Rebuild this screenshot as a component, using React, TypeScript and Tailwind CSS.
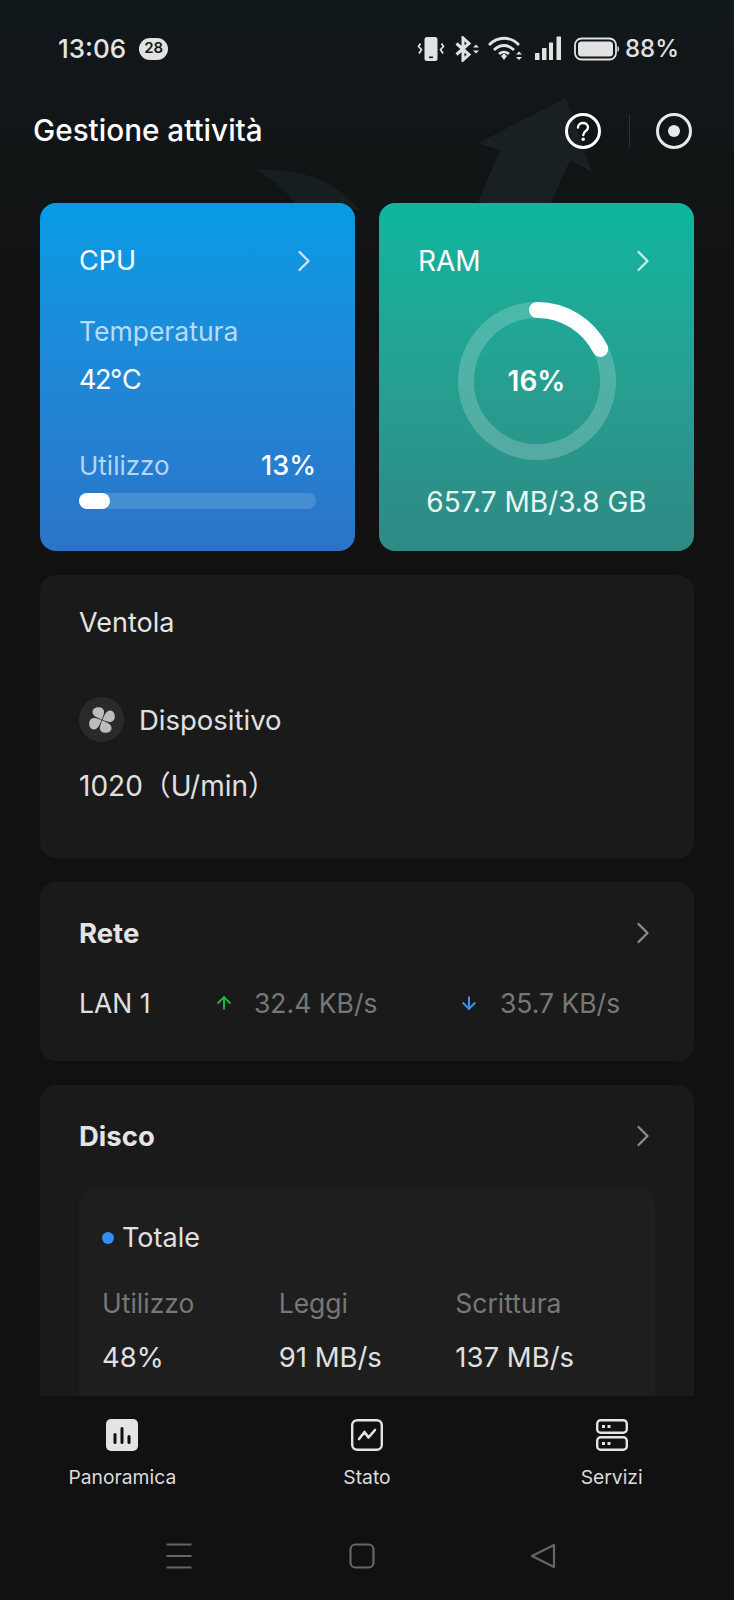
import React from 'react';
import { ChevronRight, ArrowUp, ArrowDown } from 'lucide-react';

const StatusIcons = () => (
  <div className="flex items-center text-[#e2e2e2]">
    {/* vibrate */}
    <svg width="28" height="26" viewBox="0 0 28 26" className="mr-[10px]">
      <rect x="7.5" y="1" width="13" height="24" rx="2.5" fill="currentColor" />
      <rect x="12" y="20.5" width="4" height="1.6" fill="#14191b" />
      <path d="M3.5 7.5 L1.5 10.5 L4.5 13.5 L2 17.5" stroke="currentColor" strokeWidth="1.7" fill="none" />
      <path d="M24.5 7.5 L26.5 10.5 L23.5 13.5 L26 17.5" stroke="currentColor" strokeWidth="1.7" fill="none" />
    </svg>
    {/* bluetooth */}
    <svg width="25" height="26" viewBox="0 0 25 26" className="mr-[8px]">
      <path d="M1.5 7.5 L14 18.5 L8 24 V2 L14 7.5 L1.5 18.5" stroke="currentColor" strokeWidth="3" fill="none" />
      <path d="M18 11.5 L21 8.5 L24 11.5 Z M18 14.5 L21 17.5 L24 14.5 Z" fill="currentColor" />
    </svg>
    {/* wifi */}
    <svg width="36" height="26" viewBox="0 0 36 26" className="mr-[10px]">
      <path d="M1 9 C10 0 22 0 31 9" stroke="currentColor" strokeWidth="2.8" fill="none" />
      <path d="M6 14 C12 8 20 8 26 14" stroke="currentColor" strokeWidth="2.8" fill="none" />
      <path d="M11 18 C14 15.5 18 15.5 21 18" stroke="currentColor" strokeWidth="2.8" fill="none" />
      <path d="M13 20 L16 17.5 L19 20 L16 24 Z" fill="currentColor" />
      <path d="M28 18.5 L31 15.5 L34 18.5 Z M28 21 L31 24 L34 21 Z" fill="currentColor" />
    </svg>
    {/* signal */}
    <svg width="28" height="26" viewBox="0 0 28 26" className="mr-[12px]">
      <rect x="1" y="17" width="4.5" height="7" rx="0.5" fill="currentColor" />
      <rect x="8" y="12" width="4.5" height="12" rx="0.5" fill="currentColor" />
      <rect x="15" y="6.5" width="4" height="17.5" rx="0.5" fill="currentColor" />
      <rect x="22.5" y="0.5" width="4.5" height="23.5" rx="0.5" fill="currentColor" />
    </svg>
    {/* battery */}
    <svg width="46" height="24" viewBox="0 0 46 24" className="mr-[5px]">
      <rect x="1" y="1.5" width="41" height="21" rx="6.5" stroke="currentColor" strokeWidth="1.8" fill="none" />
      <rect x="4" y="4.5" width="35" height="15" rx="3.5" fill="currentColor" />
      <path d="M43.5 9 C45.5 9.5 45.5 14.5 43.5 15 Z" fill="currentColor" />
    </svg>
    <span className="text-[24px] leading-none font-medium">88%</span>
  </div>
);

const blade = 'M14 13.5 C10 12 4.5 10 4.5 6 C4.5 2.5 8 1 11 1.2 C15 1.5 16.5 4 16 7 C15.6 9.5 14.5 11 14 13.5 Z';

const FanIcon = () => (
  <svg width="28" height="28" viewBox="0 0 28 28" fill="#bdbdbd">
    {[0, 90, 180, 270].map((deg) => (
      <path key={deg} d={blade} transform={`rotate(${deg} 14 14)`} />
    ))}
  </svg>
);

const Chevron = ({ className }: { className: string }) => (
  <ChevronRight size={36} strokeWidth={1.5} className={`-my-[3px] mr-[-6px] ${className}`} />
);

export default function App() {
  return (
    <div className="relative flex h-[1600px] w-[734px] flex-col overflow-hidden bg-[#111111] text-white [font-family:Inter,'Noto_Sans_CJK_SC',sans-serif]">
      {/* watermark behind the header */}
      <div className="absolute inset-x-0 top-0 h-[320px] bg-gradient-to-b from-[#11181b] to-[#111111]" />
      <svg className="absolute left-0 top-0" width="734" height="210" viewBox="0 0 734 210">
        <path d="M478 202 L500 150 L478 143 L566 98 L592 172 L570 160 L548 210 Z" fill="#182022" />
        <path d="M255 170 C300 168 335 180 360 210 L300 210 C290 195 275 180 255 170 Z" fill="#171e20" />
      </svg>

      {/* status bar */}
      <div className="relative flex h-[96px] shrink-0 items-center justify-between pl-[58px] pr-[55px] pt-[1px]">
        <div className="flex items-center">
          <span className="text-[26px] font-medium leading-none text-[#e4e4e4]">13:06</span>
          <span className="ml-[13px] flex h-[22px] w-[29px] items-center justify-center rounded-full bg-[#e2e2e2] text-[15px] font-semibold text-[#14191b]">28</span>
        </div>
        <StatusIcons />
      </div>

      {/* header */}
      <div className="relative flex h-[68px] shrink-0 items-center justify-between pl-[33px] pr-[41px] pt-[1px]">
        <h1 className="text-[29.7px] font-medium leading-none text-white">Gestione attività</h1>
        <div className="flex items-center">
          <svg width="38" height="38" viewBox="0 0 38 38">
            <circle cx="19" cy="19" r="16.5" stroke="#fff" strokeWidth="3" fill="none" />
            <path d="M14 15.5 C14 9.5 24 9.5 24 15.5 C24 19 19.5 18.8 19.3 23" stroke="#fff" strokeWidth="2.4" fill="none" strokeLinecap="round" />
            <circle cx="19.2" cy="27.2" r="1.7" fill="#fff" />
          </svg>
          <div className="ml-[27px] mr-[25px] h-[33px] w-px bg-[#2a3032]" />
          <svg width="38" height="38" viewBox="0 0 38 38">
            <circle cx="19" cy="19" r="16.5" stroke="#e8e8e8" strokeWidth="3" fill="none" />
            <circle cx="19" cy="19" r="6" fill="#e8e8e8" />
          </svg>
        </div>
      </div>

      <main className="relative mt-[39px] flex min-h-0 flex-1 flex-col gap-[24px] overflow-hidden px-[40px]">
        <div className="flex shrink-0 gap-[24px]">
          {/* CPU */}
          <section className="h-[348px] w-[315px] rounded-[16px] bg-gradient-to-b from-[#059be5] to-[#2a74c8] px-[39px] pt-[43px]">
            <div className="flex items-center justify-between">
              <span className="text-[27px] font-normal leading-[30px]">CPU</span>
              <Chevron className="text-[#cfe6f7]" />
            </div>
            <div className="mt-[40px] text-[26.5px] leading-[30px] text-[#b8dcf7]">Temperatura</div>
            <div className="mt-[19px] text-[27px] font-normal leading-[30px] tracking-[-1.5px]">42℃</div>
            <div className="mt-[56px] flex items-center justify-between">
              <span className="text-[26px] leading-[30px] text-[#b5d6f4]">Utilizzo</span>
              <span className="text-[27px] font-medium leading-[30px]">13%</span>
            </div>
            <div className="mt-[12px] h-[16px] w-[237px] rounded-full bg-white/15">
              <div className="h-full rounded-full bg-white" style={{ width: '13%' }} />
            </div>
          </section>

          {/* RAM */}
          <section className="flex h-[348px] w-[315px] flex-col rounded-[16px] bg-gradient-to-b from-[#0db69e] to-[#2e8a84] pt-[43px]">
            <div className="flex items-center justify-between px-[39px]">
              <span className="text-[28px] font-normal leading-[30px]">RAM</span>
              <Chevron className="text-[#c8efe7]" />
            </div>
            <div className="relative mx-auto mt-[26px] h-[158px] w-[158px]">
              <svg width="158" height="158" viewBox="0 0 158 158" className="-rotate-90">
                <circle cx="79" cy="79" r="71" fill="none" stroke="#ffffff" strokeOpacity="0.2" strokeWidth="16" />
                <circle cx="79" cy="79" r="71" fill="none" stroke="#ffffff" strokeWidth="16" strokeLinecap="round" strokeDasharray="78 446" />
              </svg>
              <div className="absolute inset-0 flex items-center justify-center text-[28px] font-semibold">16%</div>
            </div>
            <div className="mt-[27px] text-center text-[28px] leading-[30px] text-[#e8f7f4]">657.7 MB/3.8 GB</div>
          </section>
        </div>

        {/* Ventola */}
        <section className="h-[283px] shrink-0 rounded-[16px] bg-[#1a1a1a] px-[39px] pt-[33px]">
          <div className="text-[27px] leading-[30px] text-[#e4e4e4]">Ventola</div>
          <div className="mt-[59px] flex items-center">
            <div className="flex h-[45px] w-[45px] items-center justify-center rounded-full bg-[#2a2a2a]">
              <FanIcon />
            </div>
            <span className="ml-[15px] text-[27.5px] leading-[30px] text-[#e0e0e0]">Dispositivo</span>
          </div>
          <div className="mt-[29px] text-[28px] leading-[30px] text-[#e0e0e0]">1020（U/min）</div>
        </section>

        {/* Rete */}
        <section className="h-[179px] shrink-0 rounded-[16px] bg-[#1a1a1a] px-[39px] pt-[36px]">
          <div className="flex items-center justify-between">
            <span className="text-[27.5px] font-bold leading-[30px] text-[#e4e4e4]">Rete</span>
            <Chevron className="text-[#8c8c8c]" />
          </div>
          <div className="mt-[40px] flex items-center text-[26.5px] leading-[30px]">
            <span className="w-[135px] text-[#e0e0e0]">LAN 1</span>
            <ArrowUp size={20} strokeWidth={2.4} className="text-[#22b04a]" />
            <span className="ml-[20px] w-[205px] text-[#777777]">32.4 KB/s</span>
            <ArrowDown size={20} strokeWidth={2.4} className="text-[#3a94f0]" />
            <span className="ml-[21px] text-[#777777]">35.7 KB/s</span>
          </div>
        </section>

        {/* Disco */}
        <section className="shrink-0 rounded-[16px] bg-[#1a1a1a] px-[39px] pb-[40px] pt-[36px]">
          <div className="flex items-center justify-between">
            <span className="text-[27.5px] font-bold leading-[30px] text-[#e4e4e4]">Disco</span>
            <Chevron className="text-[#8c8c8c]" />
          </div>
          <div className="mt-[36px] rounded-[16px] bg-[#1e1e1e] px-[23px] pb-[40px] pt-[36px]">
            <div className="flex items-center">
              <span className="h-[12px] w-[12px] rounded-full bg-[#2f8ff5]" />
              <span className="ml-[8px] text-[27px] leading-[30px] text-[#e0e0e0]">Totale</span>
            </div>
            <div className="mt-[35px] grid grid-cols-3 leading-[30px]">
              <span className="text-[26.5px] text-[#777777]">Utilizzo</span>
              <span className="text-[26.5px] text-[#777777]">Leggi</span>
              <span className="text-[26.5px] text-[#777777]">Scrittura</span>
              <span className="mt-[24px] text-[27.5px] text-[#e0e0e0]">48%</span>
              <span className="mt-[24px] text-[27.5px] text-[#e0e0e0]">91 MB/s</span>
              <span className="mt-[24px] text-[27.5px] text-[#e0e0e0]">137 MB/s</span>
            </div>
          </div>
        </section>
      </main>

      {/* tab bar */}
      <nav className="relative grid h-[116px] shrink-0 grid-cols-3 bg-[#111111] pt-[23px]">
        <div className="flex flex-col items-center">
          <svg width="32" height="32" viewBox="0 0 32 32">
            <rect x="0" y="0" width="32" height="32" rx="5" fill="#e4e4e4" />
            <rect x="7.5" y="14" width="3" height="11" rx="1.5" fill="#111" />
            <rect x="14.5" y="8" width="3" height="17" rx="1.5" fill="#111" />
            <rect x="21.5" y="16" width="3" height="9" rx="1.5" fill="#111" />
          </svg>
          <span className="mt-[14px] text-[19.3px] leading-[24px] text-[#dcdcdc]">Panoramica</span>
        </div>
        <div className="flex flex-col items-center">
          <svg width="32" height="32" viewBox="0 0 32 32" fill="none" stroke="#e4e4e4">
            <rect x="1.2" y="1.2" width="29.6" height="29.6" rx="5" strokeWidth="2.4" />
            <path d="M8 20 L13.5 13 L17.5 18.5 L24 11" strokeWidth="2.6" strokeLinejoin="round" strokeLinecap="round" />
          </svg>
          <span className="mt-[14px] text-[19.3px] leading-[24px] text-[#dcdcdc]">Stato</span>
        </div>
        <div className="flex flex-col items-center">
          <svg width="32" height="32" viewBox="0 0 32 32" fill="none" stroke="#e4e4e4">
            <rect x="1.2" y="1.2" width="29.6" height="12.6" rx="3.5" strokeWidth="2.4" />
            <rect x="1.2" y="18.2" width="29.6" height="12.6" rx="3.5" strokeWidth="2.4" />
            <rect x="6" y="6" width="3" height="3" fill="#e4e4e4" stroke="none" />
            <rect x="11.5" y="6" width="3" height="3" fill="#e4e4e4" stroke="none" />
            <rect x="6" y="23" width="3" height="3" fill="#e4e4e4" stroke="none" />
            <rect x="11.5" y="23" width="3" height="3" fill="#e4e4e4" stroke="none" />
          </svg>
          <span className="mt-[14px] text-[19.3px] leading-[24px] text-[#dcdcdc]">Servizi</span>
        </div>
      </nav>

      {/* system nav */}
      <div className="relative flex h-[88px] shrink-0 items-start bg-[#111111] pl-[166px] pt-[31px]">
        <svg width="26" height="26" viewBox="0 0 26 26" stroke="#666" strokeWidth="2.2">
          <path d="M0.5 1.5 H25.5 M0.5 13 H25.5 M0.5 24.5 H25.5" />
        </svg>
        <svg width="26" height="26" viewBox="0 0 26 26" fill="none" stroke="#666" strokeWidth="2.2" className="ml-[157px]">
          <rect x="1.5" y="1.5" width="23" height="23" rx="5" />
        </svg>
        <svg width="26" height="26" viewBox="0 0 26 26" fill="none" stroke="#666" strokeWidth="2.2" strokeLinejoin="round" className="ml-[155px]">
          <path d="M24 2 V24 L2 13 Z" />
        </svg>
      </div>
    </div>
  );
}
